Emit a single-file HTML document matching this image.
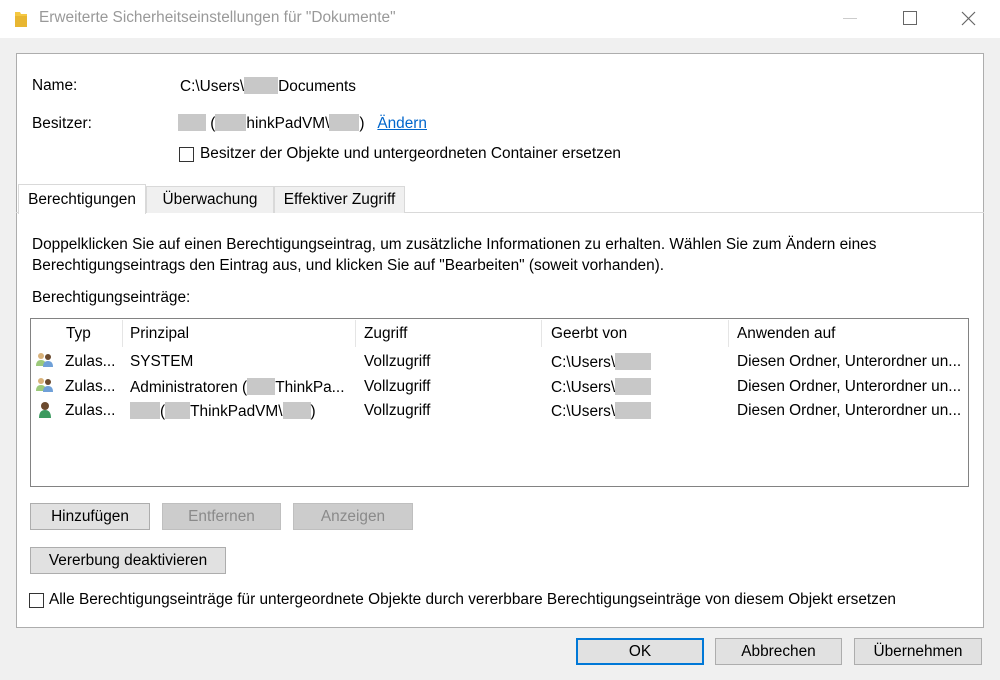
<!DOCTYPE html>
<html><head><meta charset="utf-8"><style>
*{margin:0;padding:0;box-sizing:border-box}
body{width:1000px;height:680px;background:#f0f0f0;font-family:"Liberation Sans",Arial,sans-serif;font-size:15.4px;color:#000;position:relative;overflow:hidden}
.a{position:absolute;white-space:nowrap}
.title{left:0;top:0;width:1000px;height:38px;background:#fff}
.panel{left:16px;top:53px;width:968px;height:575px;background:#fff;border:1px solid #adadad}
.btn{position:absolute;height:27px;background:#e1e1e1;border:1px solid #adadad;text-align:center;line-height:25px}
.dis{background:#cccccc;border-color:#bfbfbf;color:#8a8a8a}
.blur{display:inline-block;background:#c8c8c8;height:17px;vertical-align:-3px}
.cb{position:absolute;width:15px;height:15px;border:1px solid #333;background:#fff}
.tab{position:absolute;top:186px;height:27px;border:1px solid #d9d9d9;border-bottom:none;background:#f0f0f0;line-height:25px;text-align:center}
.hd{position:absolute;top:320px;height:27px;line-height:27px}
.sep{position:absolute;top:320px;width:1px;height:27px;background:#e5e5e5}
</style></head><body>
<div class="a title"></div>
<svg class="a" style="left:14px;top:10px" width="14" height="18"><path d="M1 2h5l1 2h6v13H1z" fill="#f5c842"/><path d="M1 6h12v11H1z" fill="#e8b631"/></svg>
<div class="a" style="left:39px;top:9px;color:#999">Erweiterte Sicherheitseinstellungen für "Dokumente"</div>
<div class="a" style="left:843px;top:18px;width:14px;height:1px;background:#ccc"></div>
<div class="a" style="left:903px;top:11px;width:14px;height:14px;border:1px solid #666"></div>
<svg class="a" style="left:961px;top:11px" width="15" height="15"><path d="M1 1L14 14M14 1L1 14" stroke="#666" stroke-width="1.2"/></svg>

<div class="a panel"></div>
<div class="a" style="left:32px;top:77px">Name:</div>
<div class="a" style="left:180px;top:77px">C:\Users\<span class="blur" style="width:34px"></span>Documents</div>
<div class="a" style="left:32px;top:115px">Besitzer:</div>
<div class="a" style="left:178px;top:114px"><span class="blur" style="width:28px"></span> (<span class="blur" style="width:31px"></span>hinkPadVM\<span class="blur" style="width:30px"></span>)&nbsp;&nbsp; <span style="color:#0066cc;text-decoration:underline">Ändern</span></div>
<div class="cb" style="left:179px;top:147px"></div>
<div class="a" style="left:200px;top:145px">Besitzer der Objekte und untergeordneten Container ersetzen</div>

<div class="a" style="left:16px;top:212px;width:968px;height:1px;background:#d9d9d9"></div>
<div class="tab" style="left:146px;width:128px">Überwachung</div>
<div class="tab" style="left:274px;width:131px">Effektiver Zugriff</div>
<div class="tab" style="left:18px;top:184px;width:128px;height:30px;background:#fff;line-height:30px">Berechtigungen</div>

<div class="a" style="left:32px;top:234px;line-height:21px">Doppelklicken Sie auf einen Berechtigungseintrag, um zusätzliche Informationen zu erhalten. Wählen Sie zum Ändern eines<br>Berechtigungseintrags den Eintrag aus, und klicken Sie auf "Bearbeiten" (soweit vorhanden).</div>
<div class="a" style="left:32px;top:289px">Berechtigungseinträge:</div>

<div class="a" style="left:30px;top:318px;width:939px;height:169px;border:1px solid #828282;background:#fff"></div>
<div class="hd" style="left:66px">Typ</div>
<div class="hd" style="left:130px">Prinzipal</div>
<div class="hd" style="left:364px">Zugriff</div>
<div class="hd" style="left:551px">Geerbt von</div>
<div class="hd" style="left:737px">Anwenden auf</div>
<div class="sep" style="left:122px"></div><div class="sep" style="left:355px"></div><div class="sep" style="left:541px"></div><div class="sep" style="left:728px"></div>

<svg class="a" style="left:35px;top:352px" width="20" height="16"><circle cx="6" cy="4" r="3" fill="#d9b27a"/><path d="M1 14q0-6 5-6q5 0 5 6z" fill="#9cc97a"/><circle cx="13" cy="5" r="3" fill="#6b4a2e"/><path d="M8 15q0-6 5-6q5 0 5 6z" fill="#6fa0d8"/></svg>
<svg class="a" style="left:35px;top:377px" width="20" height="16"><circle cx="6" cy="4" r="3" fill="#d9b27a"/><path d="M1 14q0-6 5-6q5 0 5 6z" fill="#9cc97a"/><circle cx="13" cy="5" r="3" fill="#6b4a2e"/><path d="M8 15q0-6 5-6q5 0 5 6z" fill="#6fa0d8"/></svg>
<svg class="a" style="left:37px;top:401px" width="16" height="18"><circle cx="8" cy="5" r="4" fill="#6b4a2e"/><path d="M2 17q0-8 6-8q6 0 6 8z" fill="#3c9a5f"/></svg>

<div class="a" style="left:65px;top:353px">Zulas...</div><div class="a" style="left:130px;top:353px">SYSTEM</div><div class="a" style="left:364px;top:353px">Vollzugriff</div><div class="a" style="left:551px;top:353px">C:\Users\<span class="blur" style="width:36px"></span></div><div class="a" style="left:737px;top:353px">Diesen Ordner, Unterordner un...</div>
<div class="a" style="left:65px;top:378px">Zulas...</div><div class="a" style="left:130px;top:378px">Administratoren (<span class="blur" style="width:28px"></span>ThinkPa...</div><div class="a" style="left:364px;top:378px">Vollzugriff</div><div class="a" style="left:551px;top:378px">C:\Users\<span class="blur" style="width:36px"></span></div><div class="a" style="left:737px;top:378px">Diesen Ordner, Unterordner un...</div>
<div class="a" style="left:65px;top:402px">Zulas...</div><div class="a" style="left:130px;top:402px"><span class="blur" style="width:30px"></span>(<span class="blur" style="width:25px"></span>ThinkPadVM\<span class="blur" style="width:28px"></span>)</div><div class="a" style="left:364px;top:402px">Vollzugriff</div><div class="a" style="left:551px;top:402px">C:\Users\<span class="blur" style="width:36px"></span></div><div class="a" style="left:737px;top:402px">Diesen Ordner, Unterordner un...</div>

<div class="btn" style="left:30px;top:503px;width:120px">Hinzufügen</div>
<div class="btn dis" style="left:162px;top:503px;width:119px">Entfernen</div>
<div class="btn dis" style="left:293px;top:503px;width:120px">Anzeigen</div>
<div class="btn" style="left:30px;top:547px;width:196px">Vererbung deaktivieren</div>
<div class="cb" style="left:29px;top:593px"></div>
<div class="a" style="left:49px;top:591px">Alle Berechtigungseinträge für untergeordnete Objekte durch vererbbare Berechtigungseinträge von diesem Objekt ersetzen</div>

<div class="btn" style="left:576px;top:638px;width:128px;border:2px solid #0078d7;line-height:23px">OK</div>
<div class="btn" style="left:715px;top:638px;width:127px">Abbrechen</div>
<div class="btn" style="left:854px;top:638px;width:128px">Übernehmen</div>
</body></html>
